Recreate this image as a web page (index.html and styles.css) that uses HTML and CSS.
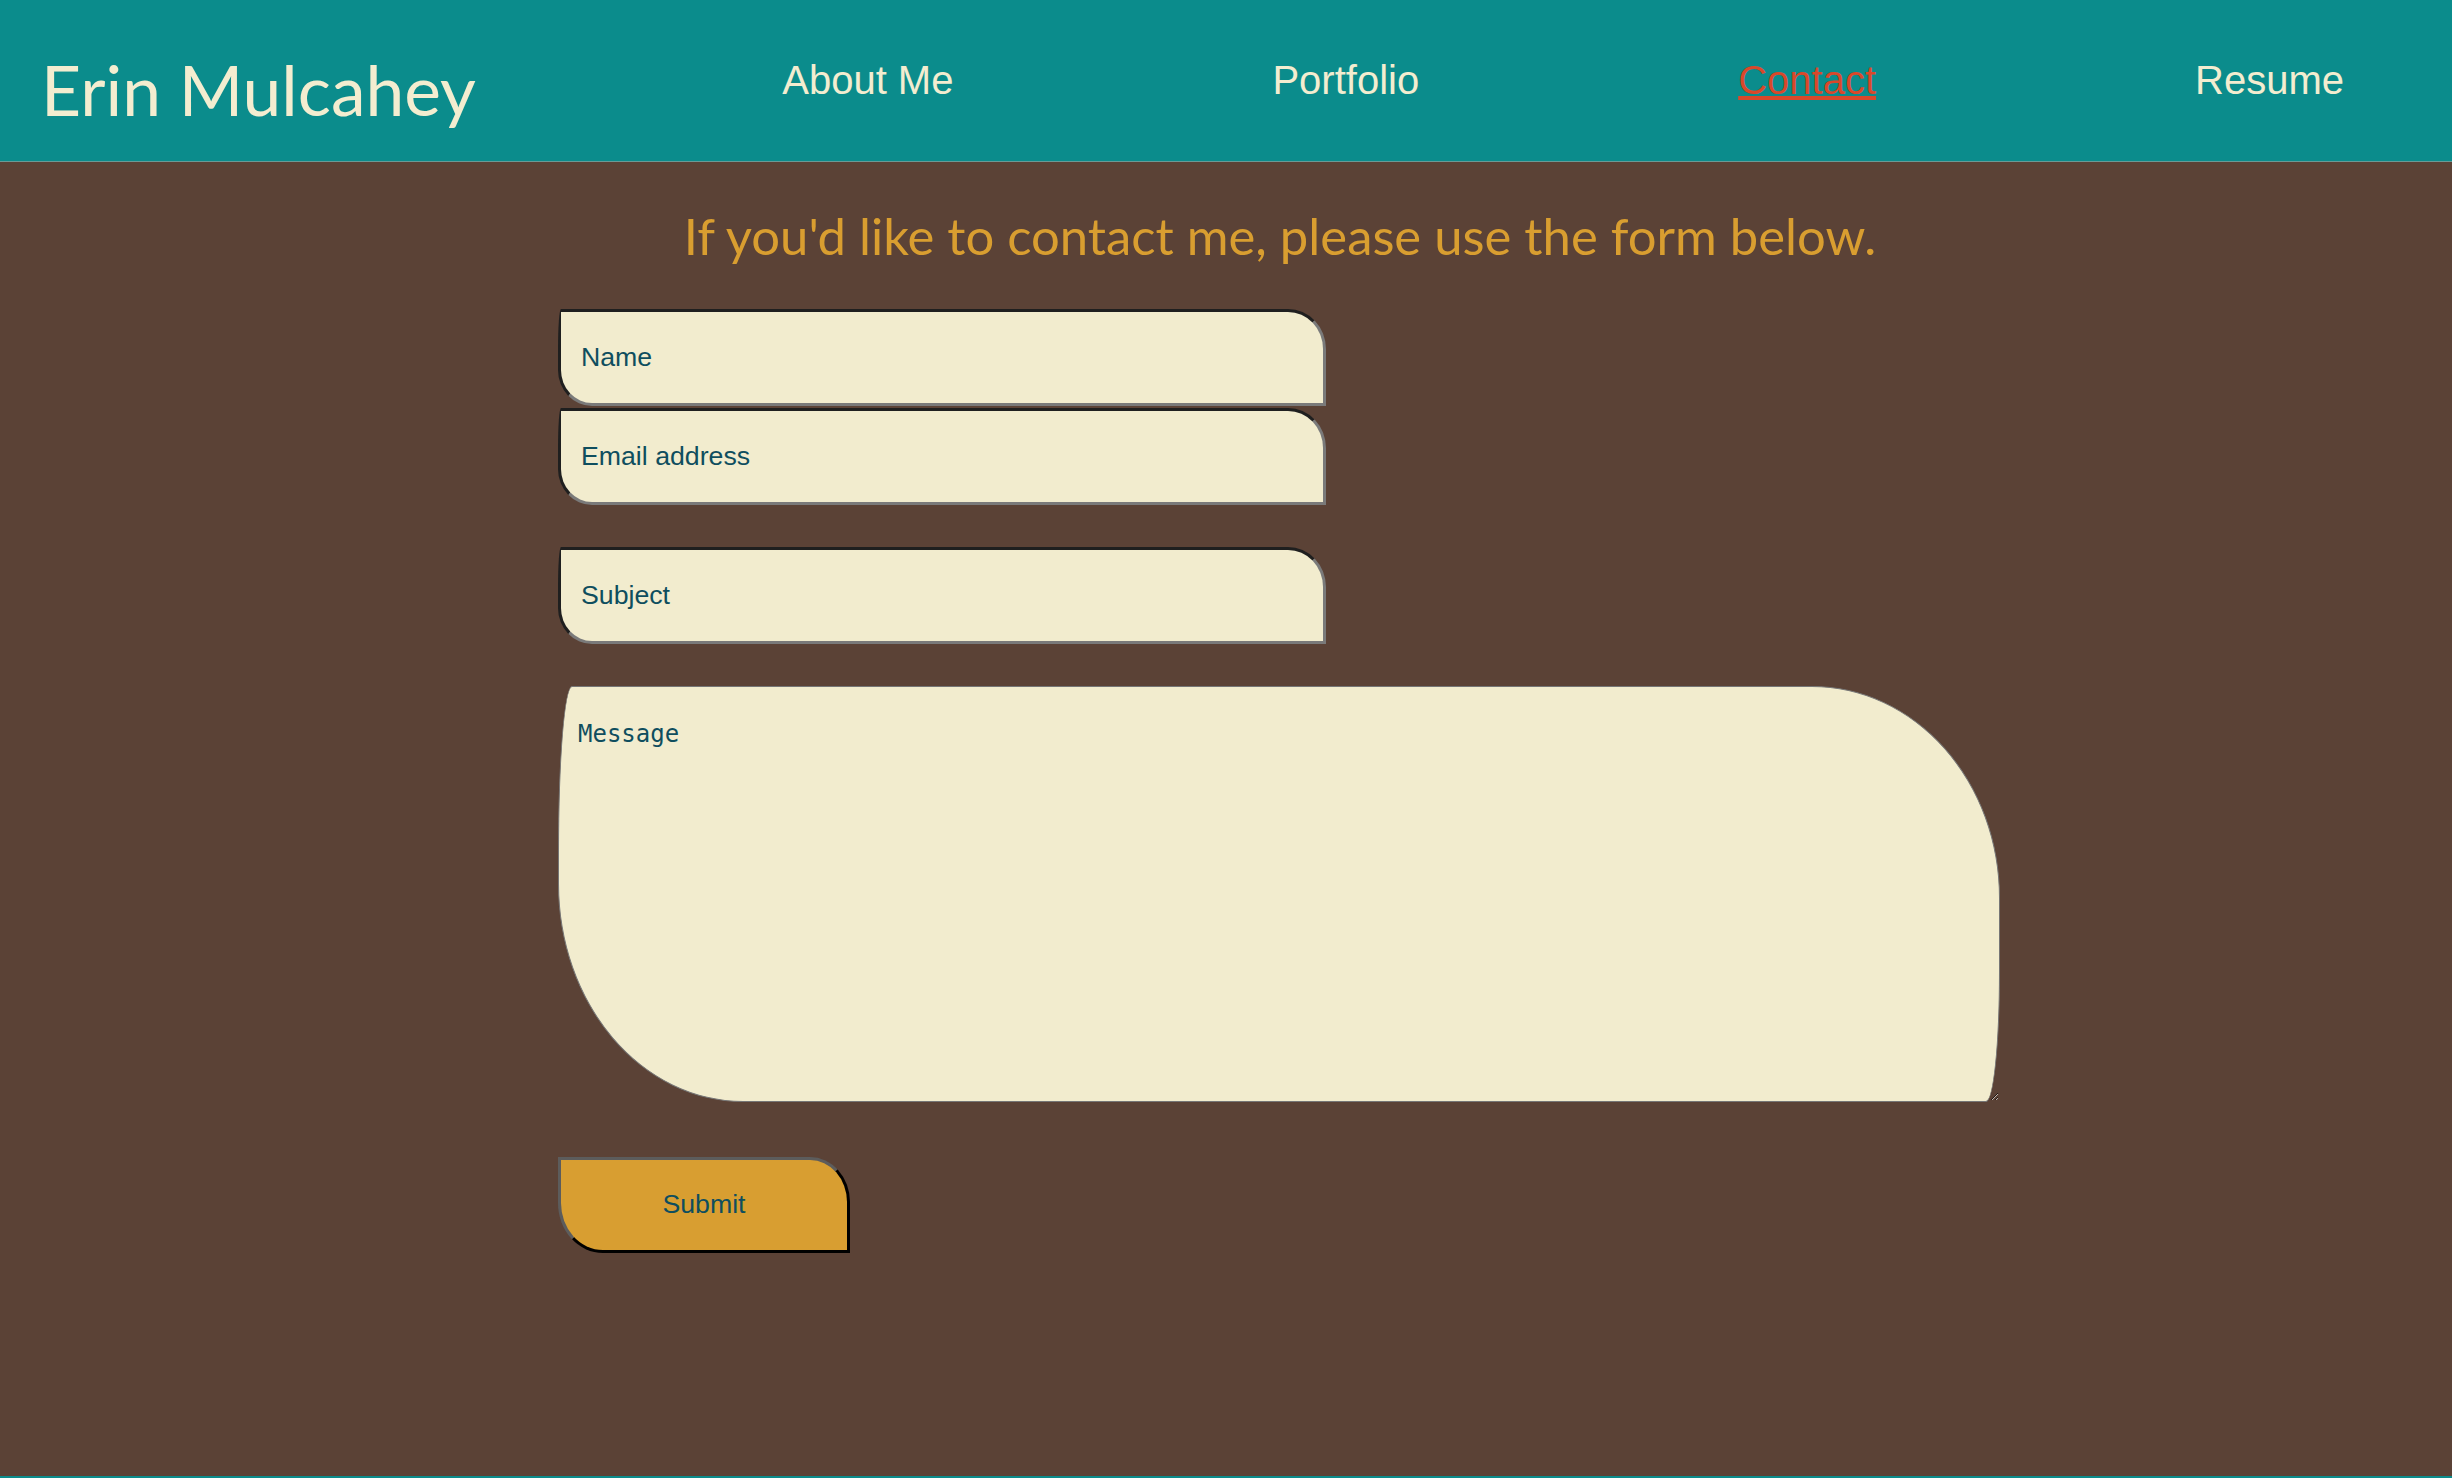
FILE: index.html
```html
<!DOCTYPE html>
<html lang="en">
<head>
<meta charset="utf-8">
<title>Contact | Erin Mulcahey</title>
<link rel="stylesheet" href="styles.css">
</head>
<body>
<header class="site-header">
  <h1 class="brand">Erin Mulcahey</h1>
  <nav class="nav">
    <a class="nav-link" href="#">About Me</a>
    <a class="nav-link" href="#">Portfolio</a>
    <a class="nav-link nav-link-active" href="#">Contact</a>
    <a class="nav-link" href="#">Resume</a>
  </nav>
</header>
<main class="main">
  <h2 class="intro">If you'd like to contact me, please use the form below.</h2>
  <form class="contact-form">
    <input class="field" type="text" placeholder="Name">
    <input class="field field-email" type="email" placeholder="Email address">
    <input class="field field-subject" type="text" placeholder="Subject">
    <textarea class="message" placeholder="Message"></textarea>
    <button class="submit" type="button">Submit</button>
  </form>
</main>
<footer class="footer"></footer>
</body>
</html>
```
FILE: styles.css
```css
html, body {
  margin: 0;
  padding: 0;
}

body {
  background: #5b4236;
  min-height: 100vh;
  display: flex;
  flex-direction: column;
  font-family: "Liberation Sans", Arial, sans-serif;
}

.site-header {
  background: #0b8c8c;
  height: 161px;
  border-bottom: 1px solid #6a9a96;
  display: flex;
  align-items: flex-start;
}

.brand {
  margin: 55px 0 0 41px;
  font-family: Lato, "Open Sans", sans-serif;
  font-weight: 400;
  font-size: 69.5px;
  line-height: 1;
  color: #f3edd0;
}

.nav {
  display: flex;
  gap: 319px;
  margin: 60px 108px 0 auto;
}

.nav-link {
  font-family: "Liberation Sans", Arial, sans-serif;
  font-size: 40px;
  line-height: 1;
  color: #f3edd0;
  text-decoration: none;
}

.nav-link-active {
  color: #d9482a;
  text-decoration: underline;
}

.main {
  flex: 1;
  padding-left: 108px;
}

.intro {
  margin: 49px 0 0;
  text-align: center;
  font-family: Lato, "Open Sans", sans-serif;
  font-weight: 400;
  font-size: 50.8px;
  line-height: 1;
  color: #d99e30;
}

.contact-form {
  display: flex;
  flex-direction: column;
  align-items: flex-start;
  margin: 47px 0 0 450px;
}

.field {
  display: block;
  box-sizing: border-box;
  width: 768px;
  height: 97px;
  margin: 0;
  padding: 0 20px;
  border: 3px solid;
  border-color: #1f1f1f #7a7a7a #7a7a7a #1f1f1f;
  border-radius: 3px 38px 0 34px / 40px 40px 0 36px;
  background: #f2ecce;
  color: #0f4e5e;
  font-family: "Liberation Sans", Arial, sans-serif;
  font-size: 26.7px;
  outline: none;
}

.field::placeholder,
.message::placeholder {
  color: #0f4e5e;
  opacity: 1;
}

.field-email {
  margin-top: 2px;
}

.field-subject {
  margin-top: 42px;
}

.message {
  display: block;
  box-sizing: border-box;
  width: 1442px;
  height: 416px;
  margin: 42px 0 0;
  padding: 33px 19px;
  border: 1px solid #767676;
  border-radius: 14px 188px 14px 185px / 165px 212px 130px 218px;
  background: #f2ecce;
  color: #0f4e5e;
  font-family: "DejaVu Sans Mono", "Liberation Mono", monospace;
  font-size: 24px;
  outline: none;
}

.submit {
  box-sizing: border-box;
  width: 292px;
  height: 96px;
  margin-top: 55px;
  padding: 0;
  border: 3px solid;
  border-color: #5c5c5c #000 #000 #5c5c5c;
  border-radius: 0 40px 0 45px / 0 45px 0 50px;
  background: #d89e31;
  color: #0f4e5e;
  font-family: "Liberation Sans", Arial, sans-serif;
  font-size: 26.7px;
  cursor: pointer;
}

.footer {
  height: 2px;
  background: #0b8c8c;
}
```
